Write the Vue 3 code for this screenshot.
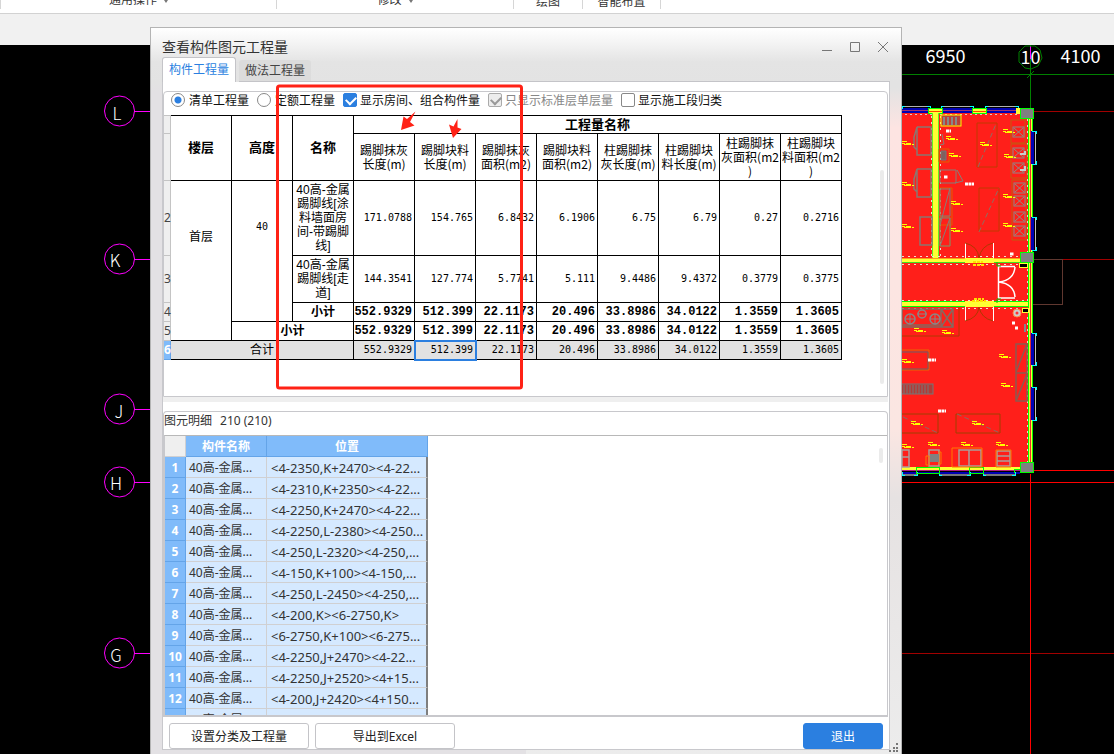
<script setup>
const ribbonGroups = [
  { name: '通用操作', menu: true, kind: 'wide' },
  { name: '修改', menu: true, kind: 'mid' },
  { name: '绘图', menu: false, kind: 'small' },
  { name: '智能布置', menu: false, kind: 'small-wide' },
]

const axes = [
  { name: 'L', x: 117, y: 120, cy: 111 },
  { name: 'K', x: 115, y: 267, cy: 259 },
  { name: 'J', x: 119, y: 418, cy: 409 },
  { name: 'H', x: 116, y: 490, cy: 482 },
  { name: 'G', x: 116, y: 662, cy: 653 },
]

const measures = [
  '踢脚抹灰\n长度(m)',
  '踢脚块料\n长度(m)',
  '踢脚抹灰\n面积(m2)',
  '踢脚块料\n面积(m2)',
  '柱踢脚抹\n灰长度(m)',
  '柱踢脚块\n料长度(m)',
  '柱踢脚抹\n灰面积(m2\n)',
  '柱踢脚块\n料面积(m2\n)',
]
const rowA = ['171.0788', '154.765', '6.8432', '6.1906', '6.75', '6.79', '0.27', '0.2716']
const rowB = ['144.3541', '127.774', '5.7741', '5.111', '9.4486', '9.4372', '0.3779', '0.3775']
const totals = ['552.9329', '512.399', '22.1173', '20.496', '33.8986', '34.0122', '1.3559', '1.3605']

const positions = [
  '<4-2350,K+2470><4-22...',
  '<4-2310,K+2350><4-22...',
  '<4-2250,K+2470><4-22...',
  '<4-2250,L-2380><4-250...',
  '<4-250,L-2320><4-250,...',
  '<4-150,K+100><4-150,...',
  '<4-250,L-2450><4-250,...',
  '<4-200,K><6-2750,K>',
  '<6-2750,K+100><6-275...',
  '<4-2250,J+2470><4-22...',
  '<4-2250,J+2520><4+15...',
  '<4-200,J+2420><4+150...',
  '',
]

// furniture tags inside the rooms of the plan
const tags = [
  [902, 143], [946, 138], [949, 155], [980, 144], [1003, 131], [1004, 156], [951, 203],
  [1003, 196], [902, 184], [902, 226], [951, 230], [1003, 225], [914, 330], [942, 332],
  [902, 361], [999, 356], [1001, 385], [911, 423], [972, 423], [902, 446], [928, 444],
  [961, 444], [996, 444],
]
const rightWindows = [[131, 164], [217, 250], [333, 365], [387, 420]]
const topWindows = [[902, 930], [941, 973], [985, 1018]]
const bottomWindows = [[902, 917], [939, 970], [983, 1015]]
const basins = [[1018, 132], [1018, 153], [1018, 168], [1019, 188], [1019, 201], [1019, 217], [1019, 231]]
</script>

<template>
  <div class="app">
    <header class="ribbon">
      <div v-for="g in ribbonGroups" :key="g.name" class="ribbon-group" :class="g.kind">
        <span>{{ g.name }}</span>
        <i v-if="g.menu" class="caret"></i>
      </div>
    </header>
    <div class="strip"></div>

    <main class="canvas">
      <svg class="plan" width="100%" height="100%" aria-hidden="true">
        <g transform="translate(0,-45)" fill="none">
          <g shape-rendering="crispEdges">
            <path d="M902 74.500H4000M1030.500 45V108" stroke="#008000" />
            <path d="M1030.500 46V59" stroke="#f0f" />
            <path d="M1033 111.500H4000M1062 259.500H4000M134 653.500H4000" stroke="#a00000" />
            <path d="M1033 470.500H4000M902 482.500H4000M1030.500 474V3000" stroke="#f00" />
            <path d="M1033 259.500H1062.500V304.500H1033" stroke="#603830" />
          </g>
          <path d="M1027 78L1034 71" stroke="#008000" />
          <path d="M1025 46L1019 52V62L1025 68L1031 69L1038 66L1042 58L1040 50L1035 46Z" stroke="#008000" />
          <g class="dims">
            <text x="945.500" y="63">6950</text>
            <text x="1030.500" y="64">10</text>
            <text x="1080.500" y="63">4100</text>
          </g>

          <g v-for="a in axes" :key="a.name">
            <circle cx="119.500" :cy="a.cy" r="15" stroke="#f0f" />
            <path :d="`M134 ${a.cy + 0.5}H151`" stroke="#f0f" />
            <text class="axis" :x="a.x" :y="a.y">{{ a.name }}</text>
          </g>

          <g shape-rendering="crispEdges">
            <rect x="890" y="112" width="140" height="358" fill="#ff1f1a" />
            <rect x="890" y="108" width="130" height="5" fill="#0000b4" />
            <path d="M890 110.500H1020" stroke="#a03070" />
            <path d="M890 114.500H1020" stroke="#d8c8c8" stroke-dasharray="2 3" />
            <g v-for="w in topWindows" :key="w[0]">
              <path :d="`M${w[0]} 106.500H${w[1]}`" stroke="#b0b0b0" />
              <path :d="`M${w[0]} 109V106H${w[0] + 3}M${w[1] - 3} 106H${w[1]}V109`" stroke="#0ff" />
            </g>
            <rect x="928.500" y="108.500" width="14" height="5" fill="#ff3" stroke="#0f0" />
            <rect x="972.500" y="108.500" width="14" height="5" fill="#ff3" stroke="#0f0" />
            <rect x="1016" y="108" width="6" height="6" fill="#ff3" />
            <path d="M929 111.500H942M973 111.500H986" stroke="#ff4000" />

            <rect x="1028" y="119" width="5" height="343" fill="#ff3" />
            <path d="M1030.500 119V462" stroke="#e03030" />
            <path d="M1028.500 119V462M1032.500 119V462" stroke="#0f0" />
            <path d="M1027.500 119V462" stroke="#e8e0d0" stroke-dasharray="2 4" />
            <g v-for="w in rightWindows" :key="w[0]">
              <rect x="1031" :y="w[0]" width="3" :height="w[1] - w[0]" fill="#0000b4" />
              <path :d="`M1035.500 ${w[0]}V${w[1]}`" stroke="#c0c0c0" />
              <path :d="`M1032 ${w[0]}H1036V${w[0] + 3}M1032 ${w[1]}H1036V${w[1] - 3}`" stroke="#0ff" />
            </g>

            <rect x="933" y="113" width="5" height="146" fill="#ff3" />
            <path d="M932.500 113V258M938.500 113V258" stroke="#60f020" />
            <path d="M931.500 116V258M940.500 116V258" stroke="#f0e0d0" stroke-dasharray="2 4" />

            <rect x="890" y="258" width="132" height="5" fill="#ff3" />
            <path d="M890 262.500H965M994 262.500H1020" stroke="#40e020" />
            <path d="M890 258.500H965M994 258.500H1020" stroke="#ff9820" />
            <path d="M890 256.500H1020M890 264.500H1027" stroke="#f0e0d0" stroke-dasharray="2 4" />
            <rect x="890" y="301" width="138" height="6" fill="#ff3" />
            <path d="M890 301.500H965M994 301.500H1028M890 306.500H965M994 306.500H1028" stroke="#0f0" />
            <path d="M890 300.500H1027M890 308.500H1020" stroke="#f0e0d0" stroke-dasharray="2 4" />
            <path d="M890 468.500H1020" stroke="#ff3" stroke-width="3" />
            <path d="M890 470.500H1020" stroke="#b02080" />
            <path d="M890 472.500H1020" stroke="#0000b4" stroke-width="2" />
            <g v-for="w in bottomWindows" :key="w[0]">
              <path :d="`M${w[0]} 474.500H${w[1]}`" stroke="#777" stroke-width="2" />
              <path :d="`M${w[0]} 472V475H${w[0] + 3}M${w[1] - 3} 475H${w[1]}V472`" stroke="#0ff" />
            </g>
            <path d="M916.500 467V473H939.500V467ZM969.500 467V473H983.500V467ZM1014 473V469H1020" stroke="#0f0" />
            <rect x="1020.500" y="108.500" width="13" height="10" fill="#808080" stroke="#0f0" />
            <rect x="1020.500" y="252.500" width="13" height="10" fill="#808080" stroke="#0f0" />
            <rect x="1020.500" y="462.500" width="13" height="10" fill="#808080" stroke="#0f0" />
            <rect x="1019" y="263" width="8" height="4" fill="#000" stroke="#ff3" />
            <rect x="1022" y="308" width="6" height="4" fill="#000" stroke="#ff3" />
          </g>

          <!-- doors -->
          <g>
            <path d="M965.500 243V258M993.500 243V258M965.500 307V321M993.500 307V321" stroke="#fff" />
            <path d="M965 243Q978 246 979 258Q981 246 993 243M965 321Q978 318 979 307Q981 318 993 321" stroke="#b03800" />
            <path d="M998.500 266V298M998 266.500H1015M998 298H1015M1015 267Q1014 280 999 282Q1014 284 1015 297" stroke="#fff" stroke-width="1.500" />
            <path d="M997 262V266H1001M997 303V299H1001" stroke="#0c0" />
          </g>

          <!-- furniture -->
          <g>
            <rect x="941" y="115" width="20" height="11" stroke="#ff0" fill="#ba4038" />
            <path d="M944 117V125M948 117V125M952 117V125M956 117V125" stroke="#888" stroke-width="2" />
            <path d="M917 127H931V155H917V127L914 137V147L917 150M917 169H931V197H917V169L914 179V189L917 192M920 217H932V245H920Z" stroke="#8a7770" stroke-width="1.500" />
            <path d="M939 149H949V162H939ZM940 188H952V225H940ZM940 217H950V246H940Z" stroke="#e06000" />
            <path d="M941 151H946V160H941Z" fill="#806060" stroke="#777" />
            <path d="M942 134L944 144L940 145M940 170H956V183H940ZM957 170L963 181L955 183M940 225L950 188M940 246L950 218M940 189H950V216H940ZM940 218H950V246H940Z" stroke="#858078" />
            <path d="M977 123H997V167H977ZM979 188H999V231H979Z" stroke="#c03a00" />
            <path d="M978 167L996 124M979 232L999 188" stroke="#8f6f60" stroke-dasharray="5 3" />
            <path d="M1011 120H1025V143H1011ZM1011 144H1027V178H1011ZM1012 180H1026V240H1012Z" stroke="#c05c10" />
            <g v-for="b in basins" :key="b[1]" stroke="#8c8c88">
              <rect :x="b[0] - 5" :y="b[1] - 5" width="11" height="10" />
              <path :d="`M${b[0] - 4} ${b[1] - 4}l9 8m0 -8l-9 8`" />
            </g>
            <path d="M1020 154h5v-3M1020 170h5v-4" stroke="#ccc" stroke-width="2" />
            <path d="M902 309H953V327H902ZM941 309V327M941 309L953 327M953 309L941 327M903 325H940" stroke="#856a60" stroke-width="1.500" />
            <circle cx="910" cy="319" r="5" stroke="#888" stroke-width="1.500" />
            <circle cx="922" cy="314" r="4" stroke="#888" stroke-width="1.500" />
            <circle cx="935" cy="319" r="5" stroke="#888" stroke-width="1.500" />
            <path d="M905 319H915M910 314V324M917 314H927M930 319H940M935 314V324" stroke="#888" />
            <path d="M890 336H959V307" stroke="#b03a00" />
            <path d="M890 350H929V370H890" stroke="#e86800" />
            <path d="M890 352H928V369H890" stroke="#666" />
            <rect x="890" y="384" width="43" height="10" fill="#b03c38" stroke="#777" />
            <path d="M904 385V394M907 385V394M910 385V394M913 385V394M916 385V394M919 385V394M922 385V394M925 385V394M928 385V394" stroke="#777" />
            <path d="M1016 344H1027V401H1016ZM1016 373H1027M1016 372L1027 344M1016 401L1027 374" stroke="#8c5a50" stroke-width="1.500" />
            <path d="M890 414H938V433H890M956 414H1000V433H956Z" stroke="#a04000" />
            <path d="M903 417L938 433M957 414L1000 433" stroke="#8c6a60" stroke-dasharray="5 3" />
            <path d="M902 450H909V467H902ZM902 457H909M929 450H939V466H929ZM959 450H981V466H959ZM969 450V466M997 451H1010V466H997ZM997 456H1010M997 461H1010" stroke="#aaa09c" stroke-width="1.500" />
            <path d="M926 456H929V465H926ZM939 452H941V464H939ZM952 448H982V467H952ZM996 450H1011V467H996Z" stroke="#ff7800" />
            <rect x="930" y="454" width="9" height="8" fill="#808080" />
            <circle cx="1017" cy="313" r="4" fill="#ccc" stroke="#f84" />
            <circle cx="1017" cy="313" r="1.500" fill="#f33" />
            <path d="M1025 324V332" stroke="#888" stroke-width="2" />
          </g>

          <g stroke="#ff0">
            <path v-for="t in tags" :key="t.join()" :d="`M${t[0]} ${t[1] - 1.5}h5M${t[0]} ${t[1] + 0.5}h3m1 0h5m1 1h2M${t[0] + 2} ${t[1] + 1.5}h7`" />
          </g>
          <path d="M973 265h12M973 262h10M972 301h14M974 299h10" stroke="#ffe000" stroke-width="2" stroke-dasharray="3 1" />
          <path d="M965 184h9M946 131h5M928 360h8M938 411h8M1010 254h4M1012 323h3M1015 328h3M944 177h4" stroke="#fff" stroke-width="3" stroke-dasharray="3 .5" />
        </g>
      </svg>
    </main>

    <section class="dialog" role="dialog" aria-labelledby="dlg-title">
      <div class="titlebar">
        <h1 id="dlg-title">查看构件图元工程量</h1>
        <div class="win-buttons">
          <button type="button" aria-label="最小化"><svg width="12" height="12"><path d="M1 9.500H11" /></svg></button>
          <button type="button" aria-label="最大化"><svg width="12" height="12"><path d="M1.500 1.500H10.500V10.500H1.500Z" /></svg></button>
          <button type="button" aria-label="关闭"><svg width="12" height="12"><path d="M1 1L11 11M11 1L1 11" /></svg></button>
        </div>
      </div>

      <nav class="tabs" role="tablist">
        <button type="button" role="tab" aria-selected="true" class="tab active">构件工程量</button>
        <button type="button" role="tab" aria-selected="false" class="tab">做法工程量</button>
        <div class="tabs-line"></div>
      </nav>

      <div class="pane">
        <div class="upper">
          <div class="options">
            <label><input type="radio" name="mode" checked />清单工程量</label>
            <label><input type="radio" name="mode" />定额工程量</label>
            <label class="tick"><input type="checkbox" checked />显示房间、组合构件量</label>
            <label class="tick off"><input type="checkbox" checked disabled />只显示标准层单层量</label>
            <label class="tick"><input type="checkbox" />显示施工段归类</label>
          </div>

          <table class="qty">
            <colgroup>
              <col class="c-idx" />
              <col v-for="n in 11" :key="n" class="c-val" />
            </colgroup>
            <thead>
              <tr class="h19">
                <td class="idx"></td>
                <th rowspan="2">楼层</th>
                <th rowspan="2">高度</th>
                <th rowspan="2">名称</th>
                <th colspan="8">工程量名称</th>
              </tr>
              <tr class="h47">
                <td class="idx"></td>
                <th v-for="m in measures" :key="m" class="sub">{{ m }}</th>
              </tr>
            </thead>
            <tbody>
              <tr class="h75">
                <td class="idx"><span>2</span></td>
                <td rowspan="4" class="mid raised">首层</td>
                <td rowspan="3" class="mid raised num-mid">40</td>
                <td class="mid name">40高-金属踢脚线[涂料墙面房间-带踢脚线]</td>
                <td v-for="(v, i) in rowA" :key="i" class="num">{{ v }}</td>
              </tr>
              <tr class="h47">
                <td class="idx"><span>3</span></td>
                <td class="mid name">40高-金属踢脚线[走道]</td>
                <td v-for="(v, i) in rowB" :key="i" class="num">{{ v }}</td>
              </tr>
              <tr class="h19 bold">
                <td class="idx"><span>4</span></td>
                <td class="mid">小计</td>
                <td v-for="(v, i) in totals" :key="i" class="num">{{ v }}</td>
              </tr>
              <tr class="h19 bold">
                <td class="idx"><span>5</span></td>
                <td colspan="2" class="mid">小计</td>
                <td v-for="(v, i) in totals" :key="i" class="num">{{ v }}</td>
              </tr>
              <tr class="h19 total">
                <td class="idx current"><span>6</span></td>
                <td colspan="3" class="mid">合计</td>
                <td v-for="(v, i) in totals" :key="i" class="num" :class="{ picked: i === 1 }">{{ v }}</td>
              </tr>
            </tbody>
          </table>
          <div class="thumb thumb-long"></div>
        </div>

        <div class="splitter"></div>

        <div class="lower">
          <div class="detail-title"><span>图元明细</span><span>210 (210)</span></div>
          <div class="detail-box">
            <table class="detail">
              <colgroup>
                <col class="d-idx" />
                <col class="d-name" />
                <col class="d-pos" />
              </colgroup>
              <thead>
                <tr>
                  <td class="corner"></td>
                  <th>构件名称</th>
                  <th>位置</th>
                </tr>
              </thead>
              <tbody>
                <tr v-for="(p, i) in positions" :key="i">
                  <th>{{ p ? i + 1 : '' }}</th>
                  <td>40高-金属...</td>
                  <td class="pos">{{ p }}</td>
                </tr>
              </tbody>
            </table>
            <div class="thumb thumb-short"></div>
          </div>
        </div>

        <footer class="actions">
          <button type="button" class="btn">设置分类及工程量</button>
          <button type="button" class="btn">导出到Excel</button>
          <button type="button" class="btn primary">退出</button>
        </footer>
      </div>

      <svg class="grip" width="10" height="10" aria-hidden="true">
        <path d="M7 0h2v2h-2zM4 4h2v2h-2zM7 4h2v2h-2zM0 7h2v2h-2zM4 7h2v2h-2zM7 7h2v2h-2z" fill="#777" />
      </svg>
    </section>

    <svg class="markup" aria-hidden="true">
      <rect x="277.500" y="86" width="244" height="302" rx="2" fill="none" stroke="#ff2216" stroke-width="3" />
      <path d="M415.500 111.500L410 122L414.500 125.500L401 130L403.500 116.500L407 119Z" fill="#ff2216" />
      <path d="M457.500 119L457.500 127.500L461.500 129L453 138L449 124.500L453.500 126.500Z" fill="#ff2216" />
    </svg>
  </div>
</template>

<style>
html,
body {
  margin: 0;
  overflow: hidden;
}
</style>

<style scoped>
.app {
  position: relative;
  display: flex;
  flex-direction: column;
  height: 100vh;
  overflow: hidden;
  font-family: "Noto Sans", "Noto Sans CJK SC", sans-serif;
  font-size: 12px;
  color: #222;
}
.app * {
  box-sizing: border-box;
}
button {
  font: inherit;
  padding: 0;
}

.ribbon {
  display: flex;
  height: 14px;
  overflow: hidden;
  background: #fff;
  border-bottom: 1px solid #d2d2d2;
  flex: none;
}
.ribbon-group {
  display: flex;
  align-items: flex-end;
  justify-content: center;
  gap: 7px;
  height: 9px;
  border-right: 1px solid #d6d6d6;
  line-height: 16px;
  color: #333;
}
.wide {
  width: 277px;
  padding-bottom: 1px;
  border-left: 1px solid #d6d6d6;
}
.mid-group,
.ribbon-group.mid {
  width: 237px;
  padding-bottom: 1px;
}
.small {
  width: 69px;
}
.small-wide {
  width: 78px;
}
.ribbon-group.small,
.ribbon-group.small-wide {
  align-items: flex-start;
}
.small span,
.small-wide span {
  margin-top: -6px;
}
.caret {
  border: 2px solid transparent;
  border-top: 3px solid #777;
  border-bottom: 0;
  margin-bottom: 5px;
}
.strip {
  flex: none;
  height: 31px;
  background: #f1f1f1;
}
.canvas {
  flex: 1;
  min-height: 0;
  background: #000;
}
.plan {
  display: block;
}
.plan text {
  fill: #fff;
  text-anchor: middle;
  font-family: "Noto Sans CJK SC", sans-serif;
}
.dims {
  font-size: 18px;
}
.axis {
  font-size: 17px;
  font-weight: 300;
}

.dialog {
  position: absolute;
  top: 27px;
  bottom: 0;
  left: 150px;
  width: 752px;
  display: flex;
  flex-direction: column;
  padding: 0 11px 4px;
  border: 1px solid #b4b4b4;
  border-bottom: 0;
  background:
    linear-gradient(#fff 0, #f6f6f6 12px, #e4e4e4 34px, #e3e3e3 54px, transparent 64px),
    linear-gradient(90deg, #e3e1e4 50%, transparent 50%),
    linear-gradient(#e3e3e3 60px, #fde4e2 100px, #fbe6e2 400px, #e6e2e2 470px, #ececec);
}
.titlebar {
  display: flex;
  justify-content: space-between;
  align-items: center;
  height: 29px;
  padding: 8px 1px 0 0;
  flex: none;
}
.titlebar h1 {
  margin: 0;
  font-size: 14px;
  font-weight: 400;
  line-height: 20px;
  color: #333;
}
.win-buttons {
  display: flex;
  gap: 16px;
}
.win-buttons button {
  display: flex;
  border: 0;
  background: none;
}
.win-buttons path {
  fill: none;
  stroke: #777;
}
.tabs {
  display: flex;
  align-items: stretch;
  height: 25px;
  flex: none;
}
.tab {
  width: 72px;
  margin: 3px 0 0 3px;
  border: 0;
  border-bottom: 1px solid #c4c4c8;
  border-radius: 3px 3px 0 0;
  background: #dcdcdc;
  color: #444;
  line-height: 20px;
}
.tab.active {
  width: 74px;
  margin: 0;
  border: 1px solid #c4c4c8;
  border-bottom: 0;
  background: #fff;
  color: #2b7fe0;
}
.tabs-line {
  flex: 1;
  border-bottom: 1px solid #c4c4c8;
}

.pane {
  display: flex;
  flex-direction: column;
  flex: 1;
  min-height: 0;
  padding: 9px 1px 0 0;
  border: 1px solid #c8c8cc;
  border-top: 0;
  background: #fff;
}
.upper {
  position: relative;
  display: flex;
  flex-direction: column;
  height: 306px;
  border: 1px solid #c8c8cc;
  border-radius: 4px 4px 0 0;
  flex: none;
}
.options {
  display: flex;
  gap: 8px;
  padding: 0 7px;
  height: 23px;
  flex: none;
}
.options label {
  display: flex;
  align-items: center;
  gap: 4px;
  height: 16px;
  white-space: nowrap;
  color: #111;
}
.options .tick {
  gap: 3px;
}
.options .off {
  color: #888;
}
.options input {
  appearance: none;
  position: relative;
  width: 14px;
  height: 14px;
  margin: 0;
  border: 1px solid #888;
  border-radius: 2px;
  background: #fff;
}
.options input[type="radio"] {
  border-radius: 50%;
}
.options input[type="radio"]:checked {
  background: radial-gradient(circle, #2b7fe0 3px, #fff 4px);
}
.options input[type="checkbox"]:checked {
  background: #2b7fe0;
  border-color: #2b7fe0;
}
.options input[type="checkbox"]:checked::after {
  content: "";
  position: absolute;
  left: 2px;
  top: 2px;
  width: 8px;
  height: 5px;
  border: solid #fff;
  border-width: 0 0 2px 2px;
  transform: rotate(-45deg);
}
.options input[type="checkbox"]:disabled {
  background: #ededed;
  border-color: #aaa;
}
.options input[type="checkbox"]:disabled::after {
  border-color: #999;
}

table {
  border-spacing: 0;
  border-collapse: separate;
  table-layout: fixed;
}
.qty {
  width: 678px;
  flex: none;
  font-family: "DejaVu Sans Mono", "Noto Sans CJK SC", monospace;
  line-height: 14px;
  color: #000;
}
.c-idx {
  width: 7px;
}
.c-val {
  width: 61px;
}
.qty th,
.qty td {
  padding: 0;
  border-right: 1px solid #000;
  border-bottom: 1px solid #000;
}
.qty thead tr:first-child > * {
  border-top: 1px solid #000;
}
.qty th {
  font-size: 13px;
  font-weight: 700;
}
.qty .sub {
  font-family: "Noto Sans CJK SC", sans-serif;
  font-size: 12px;
  font-weight: 400;
  white-space: pre;
}
.qty .mid {
  text-align: center;
}
.qty .raised {
  padding-bottom: 48px;
}
.qty .num-mid {
  font-size: 10px;
}
.qty .name {
  font-family: "Liberation Sans", "Noto Sans CJK SC", sans-serif;
  padding: 0 2px;
  word-break: break-all;
}
.qty .num {
  text-align: right;
  padding-right: 2px;
  font-size: 10px;
}
.qty .bold {
  font-weight: 700;
}
.qty .bold .num {
  font-family: "Liberation Mono", monospace;
  font-size: 12px;
}
.qty .total td {
  background: #e2e2e2;
}
.qty .total .picked {
  outline: 2px solid #2b7fe0;
  outline-offset: -1px;
}
.qty .idx {
  border-color: #c4c4c4;
  background: #efefef;
  font-family: "Noto Sans", sans-serif;
  font-weight: 400;
  color: #444;
}
.qty thead tr:first-child > .idx {
  border-top-color: #c4c4c4;
}
.qty .idx span {
  display: block;
  width: 6px;
}
.qty .total .current {
  background: #80bbfa;
  border-color: #64a4e8;
  color: #fff;
  font-weight: 700;
}
.h47 {
  height: 47px;
}
.h75 {
  height: 75px;
}
.h19 {
  height: 19px;
}
.thumb {
  position: absolute;
  width: 4px;
  border-radius: 2px;
  background: #ebebeb;
}
.thumb-long {
  top: 78px;
  right: 3px;
  bottom: 12px;
}
.thumb-short {
  top: 12px;
  right: 4px;
  height: 15px;
}

.splitter {
  height: 5px;
  margin-bottom: 9px;
  background: #efefef;
  flex: none;
}
.lower {
  display: flex;
  flex-direction: column;
  flex: 1;
  min-height: 0;
  border: 1px solid #c8c8cc;
  border-bottom-width: 2px;
  border-radius: 4px 4px 0 0;
}
.detail-title {
  display: flex;
  gap: 8px;
  height: 23px;
  line-height: 18px;
  flex: none;
  color: #333;
}
.detail-box {
  position: relative;
  flex: 1;
  min-height: 0;
  overflow: hidden;
  border-top: 1px solid #b8b8b8;
  border-left: 1px solid #c8c8cc;
}
.detail {
  width: 263px;
  line-height: 18px;
  color: #333;
}
.d-idx {
  width: 21px;
}
.d-name {
  width: 81px;
}
.d-pos {
  width: 161px;
}
.detail tr {
  height: 21px;
}
.detail th {
  padding: 2px 0 0;
  border-right: 1px solid #64a4e8;
  border-bottom: 1px solid #64a4e8;
  background: #80bbfa;
  color: #fff;
  font-weight: 700;
}
.detail td {
  padding: 2px 0 0 3px;
  border-right: 1px solid #d0d0d2;
  border-bottom: 1px solid #d0d0d2;
  background: #d5e9ff;
  white-space: nowrap;
}
.detail td.pos {
  padding-left: 4px;
  border-right: 2px solid #7f7f7f;
  font-size: 13px;
}
.detail td.corner {
  background: #efefef;
}
.actions {
  display: flex;
  align-items: flex-start;
  gap: 6px;
  height: 32px;
  padding: 6px 5px 0 6px;
  flex: none;
}
.btn {
  width: 140px;
  height: 26px;
  border: 1px solid #c4c4c8;
  border-radius: 3px;
  background: #fff;
  color: #222;
}
.btn.primary {
  width: 80px;
  margin-left: auto;
  border-color: #2b7fe0;
  background: #2b7fe0;
  color: #fff;
}
.grip {
  position: absolute;
  right: 2px;
  bottom: 1px;
}
.markup {
  position: absolute;
  top: 0;
  left: 0;
  width: 100%;
  height: 100%;
  pointer-events: none;
}
</style>
